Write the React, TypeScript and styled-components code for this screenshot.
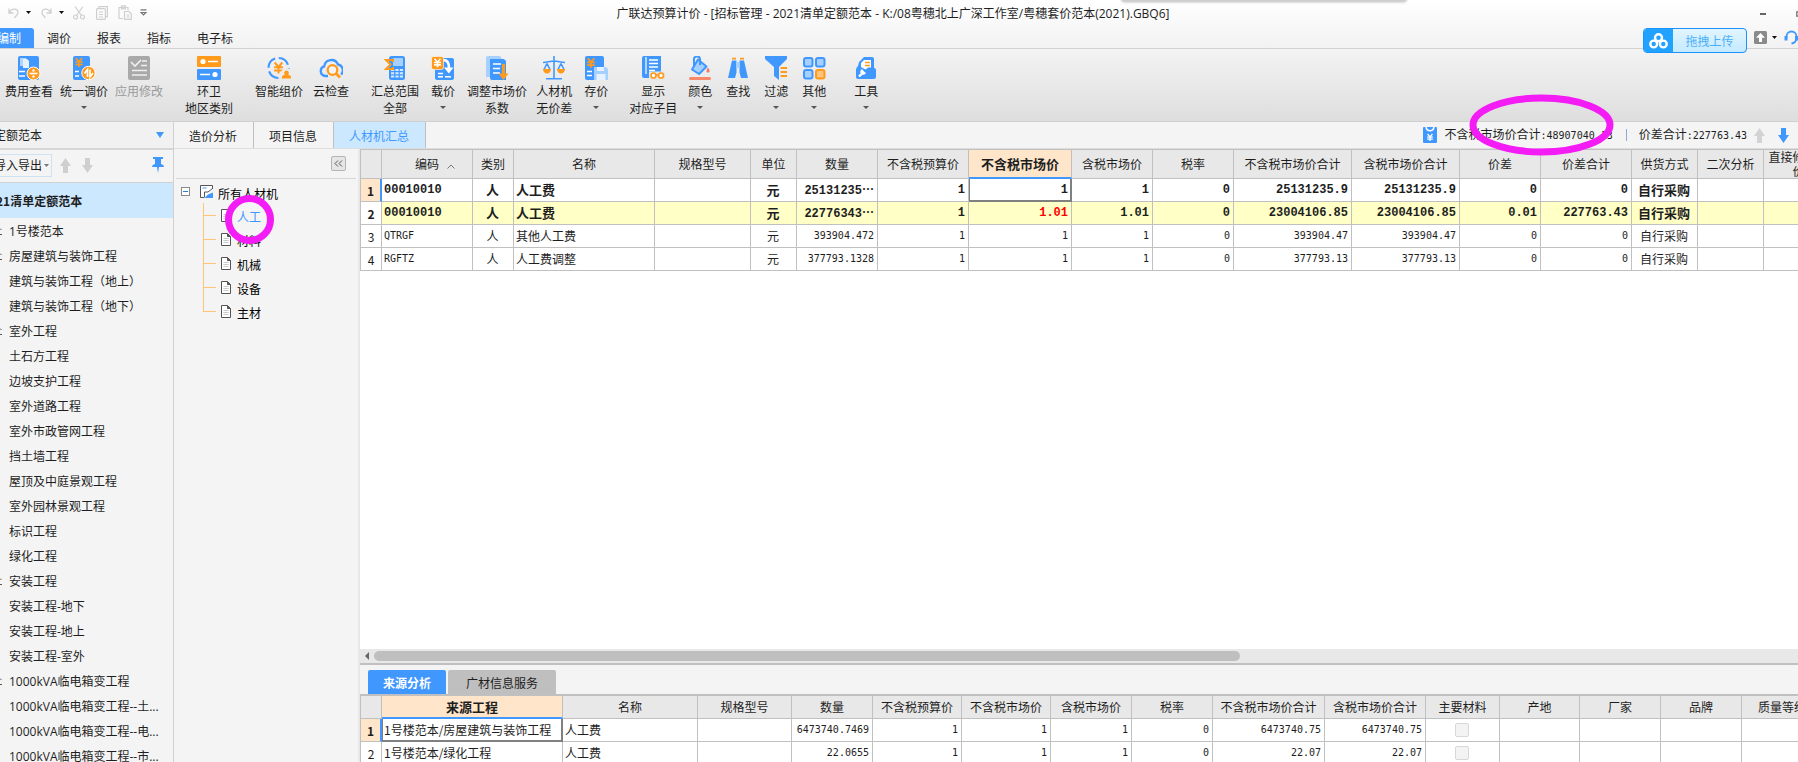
import React from 'react';
import styled, { createGlobalStyle, css } from 'styled-components';

const BLUE = '#4098ff';
const ORANGE = '#ff9a1a';
const LIGHT = '#a6d0ff';
const LINE = '#c0c0c0';
const MARK = '#f41cf4';
const UI = '"Noto Sans CJK SC", "Liberation Sans", sans-serif';
const LATIN_UI = '"Open Sans", "Noto Sans CJK SC", sans-serif';

const GlobalStyle = createGlobalStyle`
  * { box-sizing: border-box; }
  body { margin: 0; background: #f4f4f4; color: #1e1e1e; font: 12px/16px ${UI}; overflow: hidden; }
  button, select, input { font: inherit; color: inherit; margin: 0; }
  button { background: none; border: 0; padding: 0; cursor: pointer; white-space: nowrap; }
  ul { list-style: none; margin: 0; padding: 0; }
  svg { display: block; flex: none; }
`;

/* ---------- shell ---------- */
const Shell = styled.div`
  position: relative;
  display: flex;
  flex-direction: column;
  height: 100vh;
  overflow: hidden;
`;
const Top = styled.header`
  position: relative;
  flex: none;
  border-bottom: 1px solid #d2d2d2;
  background: linear-gradient(#ffffff, #f2f2f2);
`;
const TitleBar = styled.div`
  display: grid;
  grid-template-columns: 1fr auto 1fr;
  align-items: start;
  height: 28px;
`;
const QuickTools = styled.div`
  display: flex;
  align-items: center;
  height: 25px;
  padding-left: 8px;
  color: #cfcfcf;
`;
const QuickButton = styled.button<{ $gap: number }>`
  display: flex;
  align-items: center;
  gap: 7px;
  margin-right: ${(p) => p.$gap}px;
`;
const Title = styled.h1`
  margin: 0;
  padding: 0 12px 0 0;
  font-family: ${LATIN_UI};
  font-size: 12px;
  line-height: 28px;
  font-weight: 400;
`;
const WindowButtons = styled.div`
  display: flex;
  justify-content: flex-end;
  align-items: center;
  gap: 30px;
  height: 27px;
  overflow: hidden;
  color: #666;
`;
const MenuBar = styled.nav`
  display: flex;
  height: 20px;
  overflow: hidden;
`;
const MenuTab = styled.button<{ $active?: boolean }>`
  padding: 0 13px;
  line-height: 20px;
  ${(p) =>
    p.$active &&
    css`
      margin-left: -16px;
      background: ${BLUE};
      color: #fff;
      border-radius: 3px 3px 0 0;
    `}
`;
const TopExtras = styled.div`
  position: absolute;
  top: 28px;
  right: 0;
  z-index: 2;
  display: flex;
  align-items: flex-start;
  gap: 7px;
  overflow: hidden;
`;
const UploadButton = styled.button`
  display: flex;
  width: 104px;
  height: 25px;
  border: 1px solid #1b93ff;
  border-radius: 4px;
  overflow: hidden;
  background: linear-gradient(#e2f5ff, #c4eaff);
  color: #4bb0f8;
`;
const UploadLogo = styled.span`
  display: flex;
  align-items: center;
  justify-content: center;
  width: 29px;
  height: 100%;
  background: #22a2ff;
`;
const UploadText = styled.span`
  flex: 1;
  line-height: 23px;
`;
const ExtraButton = styled.button`
  display: flex;
  align-items: center;
  gap: 5px;
  height: 18px;
`;
const DockedPill = styled.div`
  position: absolute;
  top: -6px;
  left: 62.4%;
  width: 15.8%;
  height: 7px;
  background: #cfcfcf;
  border-radius: 3px;
  box-shadow: 0 0 3px 1px #b5b5b5;
`;

/* ---------- ribbon ---------- */
const Ribbon = styled.div`
  flex: none;
  display: flex;
  gap: 12px;
  height: 73px;
  padding: 7px 0 0 2px;
  border-bottom: 1px solid #cfcfcf;
  background: linear-gradient(#f3f3f3, #dedede);
`;
const RibbonGroup = styled.div<{ $gap: number; $wide?: boolean }>`
  display: flex;
  align-items: flex-start;
  gap: ${(p) => p.$gap}px;
  padding-right: ${(p) => (p.$wide ? 4 : 0)}px;
`;
const RibbonButton = styled.button`
  display: flex;
  flex-direction: column;
  align-items: center;
  min-width: 36px;
  padding: 0 3px;
  line-height: 17px;
  &:disabled { color: #9a9a9a; }
  svg { margin-bottom: 2px; }
`;
const RibbonCaret = styled.span`
  margin-top: 7px;
  border: 3px solid transparent;
  border-top-color: #555;
  border-bottom: 0;
`;

/* ---------- work area ---------- */
const Work = styled.div`
  flex: 1;
  display: flex;
  min-height: 0;
`;
const Projects = styled.aside`
  flex: none;
  width: 174px;
  border-right: 1px solid #d0d0d0;
  overflow: hidden;
`;
const PickerRow = styled.div`
  position: relative;
  display: flex;
  align-items: center;
  height: 28px;
  background: #f1f1f1;
  border-bottom: 2px solid #d6d6d6;
`;
const Picker = styled.select`
  flex: 1;
  appearance: none;
  height: 26px;
  margin-left: -6px;
  padding: 0;
  border: 0;
  outline: 0;
  background: transparent;
`;
const PickerCaret = styled.span`
  margin-right: 9px;
  border: 4px solid transparent;
  border-top: 6px solid ${BLUE};
  border-bottom: 0;
`;
const ProjectTools = styled.div`
  display: flex;
  align-items: center;
  height: 33px;
  padding-bottom: 2px;
  border-bottom: 1px solid #d0d0d0;
`;
const ImportButton = styled.button`
  display: flex;
  align-items: center;
  gap: 2px;
  height: 23px;
  margin: 0 8px 0 -8px;
  padding: 0 2px 0 1px;
  border: 1px solid #cfe2f5;
`;
const MoveButton = styled.button`
  margin-right: 11px;
`;
const PinButton = styled.button`
  margin: 0 9px 0 auto;
`;
const ProjectRoot = styled.button`
  display: flex;
  align-items: center;
  width: 100%;
  height: 35px;
  background: #cce8ff;
  font-weight: 700;
  text-indent: -4px;
`;
const ProjectItem = styled.button`
  display: flex;
  align-items: center;
  width: 100%;
  height: 25px;
  padding-top: 2px;
  font-family: ${LATIN_UI};
`;
const ProjectMark = styled.span`
  flex: none;
  width: 9px;
`;

const Main = styled.main`
  flex: 1;
  min-width: 0;
  display: flex;
  flex-direction: column;
`;
const PageTabs = styled.div`
  flex: none;
  display: flex;
  height: 27px;
  border-bottom: 1px solid #dedede;
`;
const PageTab = styled.button<{ $active?: boolean }>`
  padding: 0 16px 0 15px;
  border-right: 1px solid ${LINE};
  line-height: 28px;
  ${(p) => p.$active && css`background: #cce8ff; color: ${BLUE};`}
`;
const Totals = styled.div`
  display: flex;
  align-items: center;
  margin-left: auto;
  padding: 0 9px 0 0;
  white-space: nowrap;
`;
const TotalLabel = styled.span`
  margin-left: 8px;
  line-height: 28px;
`;
const Num = styled.span`
  font-family: "DejaVu Sans Mono", monospace;
  font-size: 10px;
`;
const TotalDivider = styled.span`
  width: 1px;
  height: 12px;
  margin: 0 4px 0 13px;
  background: #8fa9cf;
`;
const StepButton = styled.button<{ $gap: number }>`
  margin-left: ${(p) => p.$gap}px;
`;

const Split = styled.div`
  flex: 1;
  display: flex;
  min-height: 0;
`;
const TreePane = styled.section`
  flex: none;
  width: 186px;
  border-right: 2px solid #e8e8e8;
`;
const TreeHead = styled.div`
  display: flex;
  align-items: center;
  justify-content: flex-end;
  height: 30px;
  margin: 0 2px;
  padding: 0 10px 1px 0;
  border-bottom: 1px solid #d6d6d6;
`;
const Collapse = styled.button`
  display: flex;
  align-items: center;
  justify-content: center;
  width: 15px;
  height: 15px;
  border: 1px solid #b4b4b4;
  border-radius: 2px;
  background: #e6e6e6;
`;
const TreeRoot = styled.button`
  display: flex;
  align-items: center;
  height: 23px;
  margin-top: 1px;
  padding-left: 7px;
  color: #000;
`;
const Expander = styled.span`
  display: flex;
  align-items: center;
  justify-content: center;
  width: 9px;
  height: 9px;
  margin-right: 10px;
  border: 1px solid #8b8b8b;
  background: #fff;
`;
const RootLabel = styled.span`
  padding: 4px 0 0 5px;
`;
const TreeList = styled.ul`
  padding-left: 29px;
`;
const TreeItem = styled.button<{ $active?: boolean }>`
  display: flex;
  align-items: center;
  height: 24px;
  color: ${(p) => (p.$active ? BLUE : '#000')};
`;
const Branch = styled.span<{ $last?: boolean }>`
  align-self: stretch;
  width: 18px;
  background:
    linear-gradient(#ffc477, #ffc477) 0 12px / 13px 1px no-repeat,
    linear-gradient(#ffc477, #ffc477) 0 0 / 1px ${(p) => (p.$last ? '12px' : '24px')} no-repeat;
`;
const ItemLabel = styled.span`
  padding: 4px 0 0 6px;
`;

const Tables = styled.div`
  flex: 1;
  min-width: 0;
  display: flex;
  flex-direction: column;
`;
const GridPane = styled.section`
  flex: 1;
  min-height: 0;
  overflow: hidden;
  background: #fff;
`;
const Grid = styled.table`
  table-layout: fixed;
  width: 0;
  border-collapse: separate;
  border-spacing: 0;
  border-top: 1px solid ${LINE};
  border-left: 1px solid ${LINE};
  background: #fff;
`;
const HeadCell = styled.th<{ $active?: boolean; $tall?: boolean }>`
  height: ${(p) => (p.$tall ? 29 : 23)}px;
  padding: 0 4px;
  border-right: 1px solid ${LINE};
  border-bottom: 1px solid ${LINE};
  background: #e8e8e8;
  font-weight: 400;
  line-height: 14px;
  ${(p) =>
    p.$active &&
    css`
      background: #ffe6ca;
      border-bottom: 2px solid ${BLUE};
      font-size: 13px;
      font-weight: 700;
    `}
`;
const SortMark = styled.svg`
  display: inline-block;
  margin: 0 -16px 0 8px;
`;
const RowHead = styled.th<{ $active?: boolean; $bold?: boolean }>`
  height: 23px;
  padding: 2px 0 0;
  border-right: 1px solid ${LINE};
  border-bottom: 1px solid ${LINE};
  font-weight: ${(p) => (p.$bold ? 700 : 400)};
  ${(p) => p.$active && css`background: #ffe6ca; border-right: 2px solid ${BLUE};`}
`;
type CellProps = { $align?: string; $num?: boolean; $bold?: boolean; $tint?: boolean; $focus?: boolean; $red?: boolean };
const Cell = styled.td<CellProps>`
  height: 23px;
  padding: 0 3px 0 2px;
  border-right: 1px solid ${LINE};
  border-bottom: 1px solid ${LINE};
  overflow: hidden;
  white-space: nowrap;
  line-height: 16px;
  text-align: ${(p) => p.$align || 'left'};
  ${(p) => p.$num && css`font-family: "DejaVu Sans Mono", monospace; font-size: 10px;`}
  ${(p) => p.$bold && css`font-weight: 700; font-size: 13px;`}
  ${(p) => p.$bold && p.$num && css`font-family: "Liberation Mono", monospace; font-size: 12px;`}
  ${(p) => p.$tint && css`background: #ffffc6;`}
  ${(p) => p.$red && css`color: #f00;`}
  ${(p) =>
    p.$focus &&
    css`
      border-color: #808080;
      box-shadow: inset 1px 0 0 #808080, inset -1px -1px 0 #808080;
    `}
`;
const Dots = styled.span`
  font-family: "Noto Sans CJK SC", sans-serif;
`;
const Tick = styled.input`
  appearance: none;
  display: block;
  width: 14px;
  height: 14px;
  margin: 0 auto;
  border: 1px solid #d8d8d8;
  border-radius: 2px;
  background: #f3f3f3;
`;
const ScrollBar = styled.div`
  flex: none;
  display: flex;
  align-items: center;
  gap: 5px;
  height: 14px;
  padding-left: 5px;
  background: #e8e8e8;
`;
const Thumb = styled.div`
  width: 60.4%;
  height: 10px;
  border-radius: 5px;
  background: #bfbfbf;
`;
const DetailPane = styled.section`
  flex: none;
  height: 99px;
  border-top: 2px solid ${LINE};
  overflow: hidden;
`;
const DetailTabs = styled.div`
  display: flex;
  align-items: flex-end;
  gap: 2px;
  height: 30px;
  padding-left: 8px;
  border-bottom: 1px solid ${LINE};
`;
const DetailTab = styled.button<{ $active?: boolean }>`
  padding: 0 ${(p) => (p.$active ? 15 : 18)}px;
  height: 24px;
  line-height: 25px;
  border-radius: 2px 2px 0 0;
  background: ${(p) => (p.$active ? BLUE : '#bfbfbf')};
  ${(p) => p.$active && css`color: #fff; font-weight: 700;`}
`;

/* ---------- hand-drawn marks over the window ---------- */
const Mark = styled.svg<{ $side: 'left' | 'right'; $x: number; $y: number }>`
  position: absolute;
  z-index: 3;
  ${(p) => p.$side}: ${(p) => p.$x}px;
  top: ${(p) => p.$y}px;
  fill: none;
  stroke: ${MARK};
  stroke-width: 7px;
  pointer-events: none;
`;

/* ---------- icons ---------- */
const Yen = ({ x, y, c, s = 1 }: { x: number; y: number; c: string; s?: number }) => (
  <path
    transform={`translate(${x} ${y}) scale(${s})`}
    d="M-3.5 -5 L0 -1 L3.5 -5 M0 -1 V5 M-4 -.6 H4 M-4 2.2 H4"
    stroke={c}
    strokeWidth={1.8}
    fill="none"
  />
);

const icons: Record<string, React.ReactNode> = {
  fee: (
    <>
      <rect x="1" width="21" height="24" rx="2" fill={BLUE} />
      <path d="M3 2h6v8H3z" fill="#fff" opacity=".6" />
      <path d="M6 3h4l2 2v7H6z" fill="#e6f2ff" />
      <path d="M2 15.500h6M2 20h6" stroke="#fff" strokeWidth="1.600" />
      <circle cx="16.500" cy="17.500" r="6.500" fill={ORANGE} stroke="#fff" />
      <path d="M12.500 17.500h8" stroke="#fff" strokeWidth="1.600" />
      <circle cx="16.500" cy="14.500" r="1.200" fill="#fff" />
      <circle cx="16.500" cy="20.500" r="1.200" fill="#fff" />
    </>
  ),
  adjust: (
    <>
      <rect x="1" width="17" height="24" rx="2" fill={BLUE} />
      <Yen x={7} y={6.5} c={ORANGE} s={0.9} />
      <path d="M3 15.500h4M3 20h4" stroke="#fff" strokeWidth="1.600" />
      <circle cx="16.500" cy="17" r="6.700" fill={ORANGE} stroke="#fff" />
      <path d="M15.500 21v-7.500l-3 4M18 13.500V21l3-4" stroke="#fff" strokeWidth="1.700" fill="none" />
    </>
  ),
  apply: (
    <>
      <rect x="1" width="22" height="24" rx="2" fill="#a9a9a9" />
      <path d="M4 6l4 4 6-6M15 5h5M14 9.500h6M5 14.500h15M5 19h15" stroke="#f0f0f0" strokeWidth="1.600" fill="none" />
    </>
  ),
  region: (
    <>
      <rect width="24" height="11" rx="1" fill={ORANGE} />
      <rect y="13" width="24" height="11" rx="1" fill={BLUE} />
      <circle cx="6" cy="5.500" r="2.600" fill="#fff" />
      <circle cx="18" cy="18.500" r="2.600" fill="#fff" />
      <path d="M11 5.500h10M3 18.500h10" stroke="#fff" strokeWidth="1.600" />
    </>
  ),
  smart: (
    <>
      <circle cx="11.500" cy="12" r="10" fill="none" stroke={BLUE} strokeWidth="2.200" strokeDasharray="12 3.700" />
      <Yen x={11.5} y={12} c={ORANGE} s={1.1} />
      <circle cx="19.500" cy="18" r="6" fill="#ececec" />
      <path d="M15 22.500a4 3.500 0 0 1 3-4 2.200 2.200 0 1 1 3 0 4 3.500 0 0 1 3 4z" fill={ORANGE} />
    </>
  ),
  cloud: (
    <>
      <path d="M9 20H6a5 5 0 0 1-.8-9.700A7.200 7.200 0 0 1 19 8.500a5.800 5.800 0 0 1 3 10" fill="none" stroke={BLUE} strokeWidth="2.300" />
      <circle cx="13.500" cy="14" r="4.800" fill="#f4f4f4" stroke={ORANGE} strokeWidth="2.300" />
      <path d="M17 17.500l4 4" stroke={ORANGE} strokeWidth="2.600" />
    </>
  ),
  range: (
    <>
      <rect x="6" width="16" height="24" rx="2.500" fill={BLUE} />
      <rect x="10" y="2" width="10" height="8" rx="1" fill={LIGHT} />
      <path d="M8 14h12M8 17.300h12M8 20.600h12" stroke="#d6eaff" strokeWidth="2" strokeDasharray="3.200 1.200" />
      <path d="M10 6V4H3l4.500 4.500L3 13h7v-2" fill="none" stroke={ORANGE} strokeWidth="2" />
    </>
  ),
  load: (
    <>
      <rect x="4" y="2" width="19" height="22" rx="2" fill={BLUE} />
      <rect x=".5" y=".5" width="12" height="13" rx="2" fill={ORANGE} stroke="#fff" strokeWidth=".6" />
      <Yen x={6.5} y={7} c="#fff" s={0.85} />
      <path d="M12.500 4c4 0 5.500 3 5.500 8" stroke="#fff" strokeWidth="2.600" fill="none" />
      <path d="M13 11.500h9.500l-4.700 6z" fill="#fff" />
      <path d="M7 17.500h5M14 20.800h6M7 20.800h5" stroke="#fff" strokeWidth="1.500" />
    </>
  ),
  factor: (
    <>
      <path d="M1 2a2 2 0 0 1 2-2h12l2 3v18H1z" fill={LIGHT} />
      <path d="M5 3h14l2 2v19H7a2 2 0 0 1-2-2z" fill={BLUE} />
      <path d="M8 8h8M8 12.500h7M8 17h7" stroke="#fff" strokeWidth="1.600" />
      <path d="M18.500 8v11" stroke={ORANGE} strokeWidth="3" />
      <path d="M13.500 17.500h10L18.500 24z" fill={ORANGE} />
    </>
  ),
  scales: (
    <>
      <path d="M12 0v22M1 6.500c4 0 7-1.500 11-1.500s7 1.500 11 1.500M4 22.700h16M5 7.500l-3 6M5 7.500l3 6M19 7.500l-3 6M19 7.500l3 6" stroke={BLUE} strokeWidth="1.600" fill="none" />
      <path d="M1 13h8a4 4.500 0 0 1-8 0zM15 13h8a4 4.500 0 0 1-8 0z" fill={ORANGE} />
    </>
  ),
  store: (
    <>
      <rect x="1" width="19" height="24" rx="2" fill={BLUE} />
      <Yen x={7} y={7} c={ORANGE} s={0.95} />
      <path d="M3 15.500h5M3 19.500h5" stroke="#fff" strokeWidth="1.500" />
      <path d="M10 11h12l2 2v11H10z" fill={LIGHT} />
      <path d="M13 11h7v4h-7zM12.500 18h9v6h-9z" fill="#e6f2ff" />
    </>
  ),
  show: (
    <>
      <path d="M1 2a2 2 0 0 1 2-2h17v20l-1 2H3a2 2 0 0 1-2-2z" fill={BLUE} />
      <path d="M5 1v17" stroke="#fff" strokeWidth="1.200" />
      <path d="M8 4h9M8 7.500h9M8 11h9M8 14.500h6" stroke="#fff" strokeWidth="1.600" />
      <path d="M8 15.500h16V24H8z" fill="#e6e6e6" />
      <circle cx="12.500" cy="19.500" r="2.500" fill="#fff" stroke={ORANGE} strokeWidth="1.700" />
      <circle cx="20" cy="19.500" r="2.500" fill="#fff" stroke={ORANGE} strokeWidth="1.700" />
      <path d="M15 19h2.500" stroke={ORANGE} strokeWidth="1.500" />
    </>
  ),
  color: (
    <>
      <path d="M10 3.500l8.500 7L11 18l-7-4.500z" fill={LIGHT} stroke={BLUE} strokeWidth="2" strokeLinejoin="round" />
      <path d="M6 10V4a3 3 0 0 1 6-1v6" fill="none" stroke={BLUE} strokeWidth="2" />
      <path d="M20 11.500c2 3 2 5 0 5s-2-2 0-5z" fill="#f8785a" />
      <rect x="1" y="21" width="22" height="3" rx="1.500" fill="#f8886a" />
    </>
  ),
  find: (
    <>
      <path d="M6 4.500h4.500v12L9 22H2zM13.500 4.500H18L22 22h-7l-1.500-5.500z" fill={BLUE} />
      <path d="M10 6h4v6h-4z" fill={LIGHT} />
      <path d="M6 2.700h4M14 2.700h4" stroke={ORANGE} strokeWidth="1.800" />
    </>
  ),
  filter: (
    <>
      <path d="M1 0h22v3l-8 8v13l-5-4v-9L1 3z" fill={BLUE} />
      <path d="M16.500 12h6.500M16.500 16h6.500M16.500 20h6.500" stroke={ORANGE} strokeWidth="1.800" />
    </>
  ),
  other: (
    <>
      {[[2, 2, BLUE, LIGHT], [14, 2, BLUE, LIGHT], [2, 14, BLUE, LIGHT], [14, 14, ORANGE, '#ffc477']].map(([x, y, s, f]) => (
        <rect key={`${x}-${y}`} x={x} y={y} width="8.500" height="8.500" rx="2" fill={f as string} stroke={s as string} strokeWidth="2" />
      ))}
    </>
  ),
  tools: (
    <>
      <path d="M2 14c0-2 1-3 2-4l1-4 5-5h8a2 2 0 0 1 2 2v9a2 2 0 0 1 2 2v7a2 2 0 0 1-2 2H4a2 2 0 0 1-2-2z" fill={BLUE} />
      <path d="M10 4h7v7.500h-3l-2.500 2L7 11V7z" fill="#fff" />
      <path d="M11 6.500h5M11 9.500h5" stroke={ORANGE} strokeWidth="1.600" />
      <path d="M5 20.500l4-4" stroke="#fff" strokeWidth="2.400" />
      <path d="M8 13a3 3 0 1 0 4 4l-2-1.500z" fill="#fff" />
    </>
  ),
};
const Icon = ({ name }: { name: string }) => (
  <svg width="24" height="24" viewBox="0 0 24 24" aria-hidden="true">{icons[name]}</svg>
);

const Caret = ({ c = '#111' }: { c?: string }) => (
  <svg width="5" height="3" viewBox="0 0 5 3" aria-hidden="true"><path d="M0 0h5L2.500 3z" fill={c} /></svg>
);
const Arrow = ({ down, c }: { down?: boolean; c: string }) => (
  <svg width="11" height="15" viewBox="0 0 11 15" aria-hidden="true">
    <path d={down ? 'M3 0h5v7h3l-5.500 8L0 7h3z' : 'M3 15h5V8h3L5.500 0 0 8h3z'} fill={c} />
  </svg>
);
const Page = () => (
  <svg width="10" height="13" viewBox="0 0 10 13" aria-hidden="true">
    <path d="M.5 .5h6l3 3v9h-9z" fill="#fff" stroke="#555" />
    <path d="M6.500 .5v3h3" fill="#555" stroke="#555" />
    <path d="M2.500 5.500h5M2.500 7.500h5M2.500 9.500h5" stroke="#bbb" strokeWidth=".8" />
  </svg>
);

/* ---------- data ---------- */
type Tool = { icon: string; label: string; second?: string; menu?: boolean; disabled?: boolean };
const ribbon: { gap: number; wide?: boolean; tools: Tool[] }[] = [
  { gap: 1, wide: true, tools: [
    { icon: 'fee', label: '费用查看' },
    { icon: 'adjust', label: '统一调价', menu: true },
    { icon: 'apply', label: '应用修改', disabled: true },
  ] },
  { gap: 0, wide: true, tools: [{ icon: 'region', label: '环卫', second: '地区类别' }] },
  { gap: 4, wide: true, tools: [{ icon: 'smart', label: '智能组价' }, { icon: 'cloud', label: '云检查' }] },
  { gap: 3, tools: [
    { icon: 'range', label: '汇总范围', second: '全部' },
    { icon: 'load', label: '载价', menu: true },
    { icon: 'factor', label: '调整市场价', second: '系数' },
    { icon: 'scales', label: '人材机', second: '无价差' },
    { icon: 'store', label: '存价', menu: true },
  ] },
  { gap: 2, wide: true, tools: [
    { icon: 'show', label: '显示', second: '对应子目' },
    { icon: 'color', label: '颜色', menu: true },
    { icon: 'find', label: '查找' },
    { icon: 'filter', label: '过滤', menu: true },
    { icon: 'other', label: '其他', menu: true },
  ] },
  { gap: 0, tools: [{ icon: 'tools', label: '工具', menu: true }] },
];

const projects: [string, boolean?][] = [
  ['1号楼范本', true], ['房屋建筑与装饰工程', true], ['建筑与装饰工程（地上）'], ['建筑与装饰工程（地下）'],
  ['室外工程', true], ['土石方工程'], ['边坡支护工程'], ['室外道路工程'], ['室外市政管网工程'], ['挡土墙工程'],
  ['屋顶及中庭景观工程'], ['室外园林景观工程'], ['标识工程'], ['绿化工程'], ['安装工程', true], ['安装工程-地下'],
  ['安装工程-地上'], ['安装工程-室外'], ['1000kVA临电箱变工程', true], ['1000kVA临电箱变工程--土...'],
  ['1000kVA临电箱变工程--电...'], ['1000kVA临电箱变工程--市...'],
];

type Column = { title: string; width: number; align?: string; num?: boolean; tick?: boolean };
const n = (title: string, width: number): Column => ({ title, width, align: 'right', num: true });
const c = (title: string, width: number): Column => ({ title, width, align: 'center' });
const l = (title: string, width: number): Column => ({ title, width });

const mainColumns: Column[] = [
  { title: '编码', width: 91, num: true }, c('类别', 41), l('名称', 141), l('规格型号', 96), c('单位', 46),
  n('数量', 81), n('不含税预算价', 91), n('不含税市场价', 103), n('含税市场价', 81), n('税率', 81),
  n('不含税市场价合计', 118), n('含税市场价合计', 108), n('价差', 81), n('价差合计', 91), c('供货方式', 66),
  c('二次分析', 66), c('直接修改单价', 70),
];
const mainRows: string[][] = [
  ['00010010', '人', '人工费', '', '元', '25131235…', '1', '1', '1', '0', '25131235.9', '25131235.9', '0', '0', '自行采购', '', ''],
  ['00010010', '人', '人工费', '', '元', '22776343…', '1', '1.01', '1.01', '0', '23004106.85', '23004106.85', '0.01', '227763.43', '自行采购', '', ''],
  ['QTRGF', '人', '其他人工费', '', '元', '393904.472', '1', '1', '1', '0', '393904.47', '393904.47', '0', '0', '自行采购', '', ''],
  ['RGFTZ', '人', '人工费调整', '', '元', '377793.1328', '1', '1', '1', '0', '377793.13', '377793.13', '0', '0', '自行采购', '', ''],
];
const detailColumns: Column[] = [
  l('来源工程', 181), l('名称', 135), l('规格型号', 94), n('数量', 81), n('不含税预算价', 89), n('不含税市场价', 89),
  n('含税市场价', 81), n('税率', 81), n('不含税市场价合计', 112), n('含税市场价合计', 101),
  { title: '主要材料', width: 74, tick: true }, l('产地', 80), l('厂家', 81), l('品牌', 81), l('质量等级', 81),
];
const detailRows: string[][] = [
  ['1号楼范本/房屋建筑与装饰工程', '人工费', '', '6473740.7469', '1', '1', '1', '0', '6473740.75', '6473740.75', '', '', '', '', ''],
  ['1号楼范本/绿化工程', '人工费', '', '22.0655', '1', '1', '1', '0', '22.07', '22.07', '', '', '', '', ''],
];

type DataGridProps = { columns: Column[]; rows: string[][]; activeCol: number; boldRows: number; tintRow?: number; sorted?: boolean; tall?: boolean };
function DataGrid({ columns, rows, activeCol, boldRows, tintRow, sorted, tall }: DataGridProps) {
  return (
    <Grid>
      <colgroup>
        <col width={21} />
        {columns.map((col) => <col key={col.title} width={col.width} />)}
      </colgroup>
      <thead>
        <tr>
          <HeadCell $tall={tall} />
          {columns.map((col, i) => (
            <HeadCell key={col.title} scope="col" $active={i === activeCol} $tall={tall}>
              {col.title}
              {sorted && i === 0 && (
                <SortMark width="8" height="5" viewBox="0 0 8 5"><path d="M.5 4.500L4 1l3.500 3.500" fill="none" stroke="#777" /></SortMark>
              )}
            </HeadCell>
          ))}
        </tr>
      </thead>
      <tbody>
        {rows.map((row, r) => (
          <tr key={r}>
            <RowHead scope="row" $active={r === 0} $bold={r === 0 || r < boldRows}>{r + 1}</RowHead>
            {row.map((value, i) => {
              const col = columns[i];
              return (
                <Cell
                  key={col.title}
                  $align={col.align}
                  $num={col.num}
                  $bold={r < boldRows}
                  $tint={r === tintRow}
                  $focus={r === 0 && i === activeCol}
                  $red={r === tintRow && i === activeCol}
                >
                  {col.tick ? <Tick type="checkbox" disabled aria-label={`${col.title} ${r + 1}`} />
                    : value.endsWith('…') ? <>{value.slice(0, -1)}<Dots>…</Dots></> : value}
                </Cell>
              );
            })}
          </tr>
        ))}
      </tbody>
    </Grid>
  );
}

export default function App() {
  return (
    <Shell lang="zh-CN">
      <GlobalStyle />
      <Top>
        <TitleBar>
          <QuickTools>
            <QuickButton $gap={10} aria-label="撤销">
              <svg width="11" height="12" viewBox="0 0 11 12" fill="none" stroke="currentColor" strokeWidth="1.300"><path d="M1 1.500V6h4.500M1.500 5.500C3.500 1 10 1 10 5.500c0 2.500-2.500 3.500-3.500 5.500" /></svg>
              <Caret />
            </QuickButton>
            <QuickButton $gap={9} aria-label="重做">
              <svg width="11" height="12" viewBox="0 0 11 12" fill="none" stroke="currentColor" strokeWidth="1.300"><path d="M10 1.500V6H5.500M9.500 5.500C7.500 1 1 1 1 5.500 1 8 3.500 9 4.500 11" /></svg>
              <Caret />
            </QuickButton>
            <QuickButton $gap={11} aria-label="剪切">
              <svg width="12" height="14" viewBox="0 0 12 14" fill="none" stroke="currentColor" strokeWidth="1.200"><path d="M2 .5l6.500 9M10 .5l-6.500 9" /><circle cx="2.500" cy="11" r="2" /><circle cx="9.500" cy="11" r="2" /></svg>
            </QuickButton>
            <QuickButton $gap={10} aria-label="复制">
              <svg width="12" height="14" viewBox="0 0 12 14" fill="none" stroke="currentColor" strokeWidth="1.200"><path d="M3 2.500V.6h8.400v10H9.500" /><rect x=".6" y="2.600" width="8.800" height="10.800" rx="1" /><path d="M3 6h4M3 8.500h4M3 11h4" /></svg>
            </QuickButton>
            <QuickButton $gap={8} aria-label="粘贴">
              <svg width="14" height="15" viewBox="0 0 14 15" fill="none" stroke="currentColor" strokeWidth="1.200"><path d="M5 13.500H1V2.500h9v3M3.500 .8h4v3h-4z" /><path d="M6.500 6.500h4.500l2.300 2.300v5.500H6.500z" /><path d="M8.500 10h3M8.500 12h3" /></svg>
            </QuickButton>
            <QuickButton $gap={0} aria-label="自定义">
              <svg width="7" height="7" viewBox="0 0 7 7" fill="none" stroke="#777" strokeWidth="1.200"><path d="M.5 .8h6M1 3.500h5L3.500 6z" /></svg>
            </QuickButton>
          </QuickTools>
          <Title>广联达预算计价 - [招标管理 - 2021清单定额范本 - K:/08粤穗北上广深工作室/粤穗套价范本(2021).GBQ6]</Title>
          <WindowButtons>
            <button aria-label="最小化"><svg width="6" height="2"><rect width="6" height="2" fill="currentColor" /></svg></button>
            <button aria-label="最大化"><svg width="2" height="6" viewBox="0 0 2 6"><path d="M2 .8H.8v4.400H2" fill="none" stroke="currentColor" strokeWidth="1.200" /></svg></button>
          </WindowButtons>
        </TitleBar>
        <MenuBar>
          <MenuTab $active>编制</MenuTab>
          <MenuTab>调价</MenuTab>
          <MenuTab>报表</MenuTab>
          <MenuTab>指标</MenuTab>
          <MenuTab>电子标</MenuTab>
        </MenuBar>
        <DockedPill />
        <TopExtras>
          <UploadButton>
            <UploadLogo>
              <svg width="19" height="16" viewBox="0 0 19 16" fill="none" stroke="#fff" strokeWidth="2.400"><circle cx="9.500" cy="4.700" r="3.500" /><circle cx="4.700" cy="11" r="3.400" /><circle cx="14.300" cy="11" r="3.400" /></svg>
            </UploadLogo>
            <UploadText>拖拽上传</UploadText>
          </UploadButton>
          <ExtraButton aria-label="分享">
            <svg width="13" height="13" viewBox="0 0 13 13"><rect width="13" height="13" rx="1.500" fill="#8a8a8a" /><path d="M6.500 2L11 6.800H8V11H5V6.800H2z" fill="#fff" /></svg>
            <Caret />
          </ExtraButton>
          <ExtraButton aria-label="客服">
            <svg width="14" height="15" viewBox="0 0 14 15" fill="none" stroke={BLUE}><path d="M2.500 8V6.500a5 5 0 0 1 10 0V8c0 3-2 5-5 5.500" strokeWidth="1.800" /><path d="M2 6v4.500M12.500 6v4.500" strokeWidth="3" /></svg>
          </ExtraButton>
        </TopExtras>
      </Top>

      <Ribbon>
        {ribbon.map((group, g) => (
          <RibbonGroup key={g} $gap={group.gap} $wide={group.wide}>
            {group.tools.map((tool) => (
              <RibbonButton key={tool.label} disabled={tool.disabled}>
                <Icon name={tool.icon} />
                <span>{tool.label}</span>
                {tool.second && <span>{tool.second}</span>}
                {tool.menu && <RibbonCaret />}
              </RibbonButton>
            ))}
          </RibbonGroup>
        ))}
      </Ribbon>

      <Work>
        <Projects>
          <PickerRow>
            <Picker aria-label="项目"><option>定额范本</option></Picker>
            <PickerCaret />
          </PickerRow>
          <ProjectTools>
            <ImportButton>导入导出<Caret c="#777" /></ImportButton>
            <MoveButton aria-label="上移"><Arrow c="#cfcfcf" /></MoveButton>
            <MoveButton aria-label="下移"><Arrow down c="#cfcfcf" /></MoveButton>
            <PinButton aria-label="固定">
              <svg width="12" height="16" viewBox="0 0 12 16"><path d="M1 0h10v2H9v5c2 .5 3 1.500 3 3H7l-1 6-1-6H0c0-1.500 1-2.500 3-3V2H1z" fill={BLUE} /></svg>
            </PinButton>
          </ProjectTools>
          <ProjectRoot>21清单定额范本</ProjectRoot>
          <ul>
            {projects.map(([name, parent]) => (
              <li key={name}>
                <ProjectItem>
                  <ProjectMark>
                    {parent && <svg width="3" height="9" viewBox="0 0 3 9"><path d="M0 1.500L1.500 3M0 7.500h2" stroke="#555" fill="none" /></svg>}
                  </ProjectMark>
                  {name}
                </ProjectItem>
              </li>
            ))}
          </ul>
        </Projects>

        <Main>
          <PageTabs>
            <PageTab>造价分析</PageTab>
            <PageTab>项目信息</PageTab>
            <PageTab $active>人材机汇总</PageTab>
            <Totals>
              <svg width="14" height="16" viewBox="0 0 14 16"><rect width="14" height="16" rx="1" fill={BLUE} /><path d="M3 0c1 5 7 5 8 0" stroke="#fff" strokeWidth="1.500" fill="none" /><Yen x={7} y={10.5} c="#fff" s={0.7} /></svg>
              <TotalLabel>不含税市场价合计<Num>:48907040.13</Num></TotalLabel>
              <TotalDivider />
              <TotalLabel>价差合计<Num>:227763.43</Num></TotalLabel>
              <StepButton $gap={7} aria-label="上一个"><Arrow c="#d3d3d3" /></StepButton>
              <StepButton $gap={13} aria-label="下一个"><Arrow down c={BLUE} /></StepButton>
            </Totals>
          </PageTabs>

          <Split>
            <TreePane>
              <TreeHead>
                <Collapse aria-label="收起">
                  <svg width="9" height="7" viewBox="0 0 9 7" fill="none" stroke="#555"><path d="M4 .5l-3 3 3 3M8 .5l-3 3 3 3" /></svg>
                </Collapse>
              </TreeHead>
              <TreeRoot>
                <Expander><svg width="5" height="1"><rect width="5" height="1" fill="#2b7fd0" /></svg></Expander>
                <svg width="13" height="13" viewBox="0 0 13 13"><path d="M12.500 4V.5H.5v12h4" fill="#fff" stroke="#555" /><path d="M2.500 3h4" stroke={BLUE} /><path d="M4.500 12V7H8l4.500-3.500" stroke="#555" fill="none" /><path d="M5 12.500l3-3 5-2v5.500H5z" fill={BLUE} /></svg>
                <RootLabel>所有人材机</RootLabel>
              </TreeRoot>
              <TreeList>
                {['人工', '材料', '机械', '设备', '主材'].map((name, i) => (
                  <li key={name}>
                    <TreeItem $active={i === 0}>
                      <Branch $last={i === 4} />
                      <Page />
                      <ItemLabel>{name}</ItemLabel>
                    </TreeItem>
                  </li>
                ))}
              </TreeList>
            </TreePane>

            <Tables>
              <GridPane>
                <DataGrid columns={mainColumns} rows={mainRows} activeCol={7} boldRows={2} tintRow={1} sorted tall />
              </GridPane>
              <ScrollBar>
                <svg width="4" height="8" viewBox="0 0 4 8"><path d="M4 0v8L0 4z" fill="#666" /></svg>
                <Thumb />
              </ScrollBar>
              <DetailPane>
                <DetailTabs>
                  <DetailTab $active>来源分析</DetailTab>
                  <DetailTab>广材信息服务</DetailTab>
                </DetailTabs>
                <DataGrid columns={detailColumns} rows={detailRows} activeCol={0} boldRows={0} />
              </DetailPane>
            </Tables>
          </Split>
        </Main>
      </Work>

      <Mark $side="right" $x={184} $y={94} width="145" height="62" viewBox="0 0 145 62" aria-hidden="true">
        <ellipse cx="72.500" cy="31" rx="68.500" ry="27" />
      </Mark>
      <Mark $side="left" $x={225} $y={195} width="49" height="49" viewBox="0 0 49 49" aria-hidden="true">
        <circle cx="24.500" cy="24.500" r="21" />
      </Mark>
    </Shell>
  );
}
